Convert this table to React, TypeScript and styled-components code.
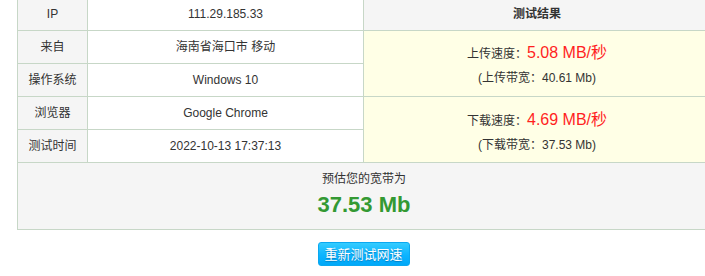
import React from 'react';
import styled, { createGlobalStyle } from 'styled-components';

const GlobalStyle = createGlobalStyle`
  html, body {
    margin: 0;
    padding: 0;
    overflow: hidden;
    background: #fff;
  }
  body {
    font-family: 'Liberation Sans', Arial, 'Noto Sans CJK SC', sans-serif;
    font-size: 12px;
    color: #333;
  }
`;

const Page = styled.div`
  margin-top: -3px;
  padding-left: 17px;
  width: 693px;
`;

const ResultTable = styled.table`
  width: 693px;
  table-layout: fixed;
  border-collapse: collapse;
  border: 1px solid #c7d7c7;

  td,
  th {
    border: 1px solid #c7d7c7;
    height: 32px;
    padding: 0;
    text-align: center;
    vertical-align: middle;
    font-weight: normal;
    line-height: 18px;
  }
`;

const Label = styled.th`
  background: #f5f5f5;
`;

const Value = styled.td`
  background: #fff;
`;

const HeadCell = styled.th`
  background: #f5f5f5;
  && {
    font-weight: bold;
  }
`;

const SpeedCell = styled.td<{ $offset: number }>`
  background: #ffffe6;
  && {
    padding-top: ${(p) => p.$offset}px;
  }
`;

const SpeedLine = styled.div`
  line-height: 24px;
  .num {
    font-size: 16px;
    color: #ff1f1f;
  }
`;

const SubLine = styled.div`
  line-height: 24px;
`;

const EstimateCell = styled.td`
  background: #f5f5f5;
  && {
    height: 66px;
  }
`;

const EstimateTitle = styled.div`
  line-height: 18px;
  margin-top: -2px;
`;

const EstimateValue = styled.div`
  font-size: 22px;
  font-weight: bold;
  color: #339933;
  line-height: 30px;
  margin-top: 2px;
`;

const ButtonRow = styled.div`
  display: flex;
  justify-content: center;
  margin-top: 12px;
`;

const RetestButton = styled.button`
  width: 92px;
  height: 24px;
  padding: 0;
  border: 1px solid #0aa8f0;
  border-radius: 3px;
  background: linear-gradient(to bottom, #34ccff 0%, #0cb4ff 55%, #00a8f8 100%);
  color: #fff;
  font-family: 'Noto Sans CJK SC', sans-serif;
  font-size: 13px;
  line-height: 22px;
  text-shadow: 0 1px 1px rgba(0, 80, 140, 0.5);
  cursor: pointer;
`;

const info = [
  { label: '来自', value: '海南省海口市 移动' },
  { label: '操作系统', value: 'Windows 10' },
  { label: '浏览器', value: 'Google Chrome' },
  { label: '测试时间', value: '2022-10-13 17:37:13' },
];

const speeds = [
  { name: '上传', speed: '5.08', band: '40.61', offset: 4 },
  { name: '下载', speed: '4.69', band: '37.53', offset: 5 },
];

const SpeedBlock = ({ s }: { s: (typeof speeds)[number] }) => (
  <SpeedCell rowSpan={2} $offset={s.offset}>
    <SpeedLine>
      {s.name}速度：<span className='num'>{s.speed} MB/秒</span>
    </SpeedLine>
    <SubLine>
      ({s.name}带宽：{s.band} Mb)
    </SubLine>
  </SpeedCell>
);

const App = () => {
  return (
    <Page>
      <GlobalStyle />
      <ResultTable>
        <colgroup>
          <col style={{ width: 70 }} />
          <col style={{ width: 276 }} />
          <col style={{ width: 347 }} />
        </colgroup>
        <tbody>
          <tr>
            <Label>IP</Label>
            <Value>111.29.185.33</Value>
            <HeadCell>测试结果</HeadCell>
          </tr>
          {info.map((row, i) => (
            <tr key={row.label}>
              <Label>{row.label}</Label>
              <Value>{row.value}</Value>
              {i % 2 === 0 && <SpeedBlock s={speeds[i / 2]} />}
            </tr>
          ))}
          <tr>
            <EstimateCell colSpan={3}>
              <EstimateTitle>预估您的宽带为</EstimateTitle>
              <EstimateValue>37.53 Mb</EstimateValue>
            </EstimateCell>
          </tr>
        </tbody>
      </ResultTable>
      <ButtonRow>
        <RetestButton>重新测试网速</RetestButton>
      </ButtonRow>
    </Page>
  );
};

export default App;
